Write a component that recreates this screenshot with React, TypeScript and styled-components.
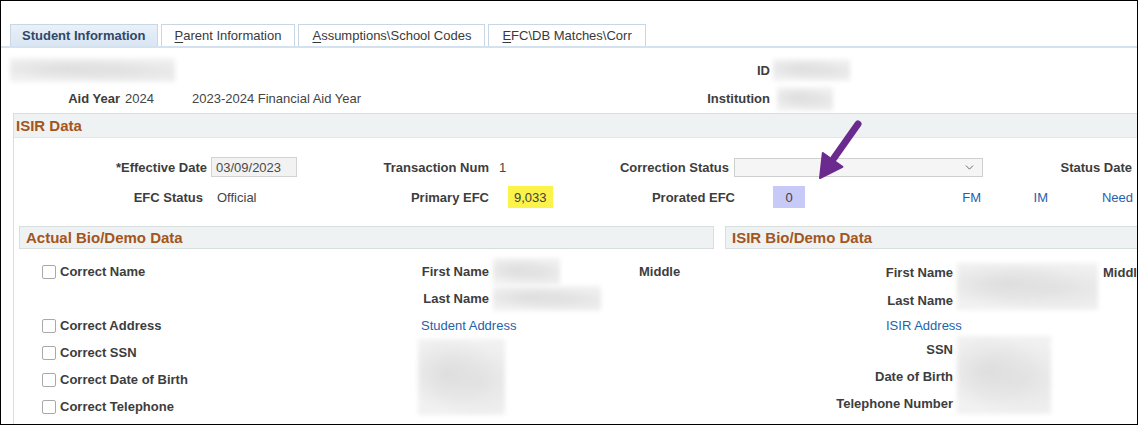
import React from 'react';
import styled, { createGlobalStyle, css } from 'styled-components';
import { ChevronDown } from 'lucide-react';

const GlobalStyle = createGlobalStyle`
	html, body {
		margin: 0;
		padding: 0;
		background: #fff;
	}

	body {
		font-family: "Liberation Sans", Arial, sans-serif;
		font-size: 13px;
		color: #333;
	}
`;

const Frame = styled.div`
	position: relative;
	width: 1138px;
	height: 425px;
	box-sizing: border-box;
	border: 1px solid #000;
	overflow: hidden;
	background: #fff;
`;

const TabBar = styled.div`
	display: flex;
	gap: 3px;
	padding: 23px 0 0 9px;
	border-bottom: 2px solid #d4e2f0;
`;

const Tab = styled.div<{ $active?: boolean }>`
	height: 22px;
	box-sizing: border-box;
	display: flex;
	align-items: center;
	padding: 0 13px;
	border: 1px solid #c9d6e4;
	border-bottom: none;
	background: #fff;
	color: #3a3a3a;
	white-space: nowrap;

	${({ $active }) => $active && css`
		padding: 0 11px;
		background: linear-gradient(#e9f0f8, #d9e6f3);
		color: #2f4868;
		font-weight: bold;
	`}

	& > u {
		text-underline-offset: 2px;
	}
`;

const Row = styled.div<{ $h: number; $mt: number; $pl?: number }>`
	display: flex;
	align-items: center;
	height: ${({ $h }) => $h}px;
	margin-top: ${({ $mt }) => $mt}px;
	padding-left: ${({ $pl }) => $pl || 0}px;
	white-space: nowrap;
`;

const Label = styled.div<{ $w: number }>`
	flex: none;
	width: ${({ $w }) => $w}px;
	text-align: right;
	font-weight: bold;
	color: #3d3d3d;
`;

const Value = styled.div<{ $w?: number; $pl?: number }>`
	flex: none;
	width: ${({ $w }) => ($w ? `${$w}px` : 'auto')};
	padding-left: ${({ $pl }) => $pl || 0}px;
	box-sizing: border-box;
	color: #444;
`;

const Smudge = styled.div<{ $w: number; $h: number; $ml?: number }>`
	flex: none;
	width: ${({ $w }) => $w}px;
	height: ${({ $h }) => $h}px;
	margin-left: ${({ $ml }) => $ml || 0}px;
	background:
		radial-gradient(ellipse at 35% 45%, #dedede 0%, rgba(222, 222, 222, 0) 60%),
		radial-gradient(ellipse at 70% 55%, #e3e3e3 0%, rgba(227, 227, 227, 0) 65%),
		#f1f1f1;
	filter: blur(2px);
`;

const Section = styled.div`
	margin: 3px -10px 0 12px;
	border-left: 1px solid #d9dfe0;
	border-top: 1px solid #d9dfe0;
	height: 320px;
`;

const SectionBar = styled.div`
	height: 23px;
	display: flex;
	align-items: center;
	background: #eff2f2;
	border-bottom: 1px solid #e2e7e7;
`;

const Title = styled.div<{ $pl: number }>`
	padding-left: ${({ $pl }) => $pl}px;
	font-size: 15px;
	font-weight: bold;
	color: #a4551c;
	white-space: nowrap;
`;

const DateInput = styled.div`
	flex: none;
	width: 86px;
	height: 20px;
	margin-left: 4px;
	box-sizing: border-box;
	display: flex;
	align-items: center;
	padding-left: 4px;
	background: #f2f2f2;
	border: 1px solid #d3d3d3;
	color: #4a4a4a;
`;

const Select = styled.div`
	flex: none;
	width: 249px;
	height: 19px;
	margin-left: 5px;
	box-sizing: border-box;
	display: flex;
	align-items: center;
	justify-content: flex-end;
	padding-right: 6px;
	background: #f5f5f5;
	border: 1px solid #cfcfcf;
	color: #555;
`;

const Mark = styled.div<{ $bg: string; $w: number; $ml: number; $center?: boolean }>`
	flex: none;
	width: ${({ $w }) => $w}px;
	height: 22px;
	margin-left: ${({ $ml }) => $ml}px;
	box-sizing: border-box;
	display: flex;
	align-items: center;
	justify-content: ${({ $center }) => ($center ? 'center' : 'flex-start')};
	padding-left: ${({ $center }) => ($center ? 0 : 6)}px;
	background: ${({ $bg }) => $bg};
	color: #3e3e3e;
`;

const Link = styled.div<{ $w?: number; $pl?: number }>`
	flex: none;
	width: ${({ $w }) => ($w ? `${$w}px` : 'auto')};
	padding-left: ${({ $pl }) => $pl || 0}px;
	text-align: ${({ $w }) => ($w ? 'right' : 'left')};
	font-weight: normal;
	color: #1f62ab;
	white-space: nowrap;
`;

const BioArea = styled.div`
	display: flex;
	gap: 11px;
	margin-top: 18px;
	padding-left: 5px;
`;

const Panel = styled.div<{ $w: number }>`
	flex: none;
	width: ${({ $w }) => $w}px;
`;

const PanelBar = styled.div`
	height: 23px;
	box-sizing: border-box;
	display: flex;
	align-items: center;
	background: #eff2f2;
	border: 1px solid #d8dede;
`;

const BioGrid = styled.div<{ $cols: string; $rows: string }>`
	display: grid;
	grid-template-columns: ${({ $cols }) => $cols};
	grid-template-rows: ${({ $rows }) => $rows};
	margin-top: 9px;
	align-items: center;
	white-space: nowrap;
`;

const Cell = styled.div<{ $col?: string; $row?: string; $pl?: number; $right?: boolean; $self?: string }>`
	grid-column: ${({ $col }) => $col || 'auto'};
	grid-row: ${({ $row }) => $row || 'auto'};
	padding-left: ${({ $pl }) => $pl || 0}px;
	text-align: ${({ $right }) => ($right ? 'right' : 'left')};
	align-self: ${({ $self }) => $self || 'center'};
	font-weight: bold;
	color: #3d3d3d;
`;

const CheckItem = styled.label`
	grid-column: 1;
	display: flex;
	align-items: center;
	gap: 4px;
	padding-left: 23px;
	font-weight: bold;
	color: #3d3d3d;
`;

const Box = styled.span`
	width: 14px;
	height: 14px;
	box-sizing: border-box;
	border: 1px solid #a9a9a9;
	border-radius: 2px;
	background: #fff;
`;

const Arrow = styled.svg`
	position: absolute;
	left: 805px;
	top: 112px;
`;

const checks = ['Correct Name', 'Correct Address', 'Correct SSN', 'Correct Date of Birth', 'Correct Telephone', ''];
const checkRows = [1, 3, 4, 5, 6, 7];

const App: React.FC = () => {
	return (
		<>
			<GlobalStyle />
			<Frame>
				<TabBar>
					<Tab $active>Student Information</Tab>
					<Tab><u>P</u>arent Information</Tab>
					<Tab><u>A</u>ssumptions\School Codes</Tab>
					<Tab><u>E</u>FC\DB Matches\Corr</Tab>
				</TabBar>

				<Row $h={24} $mt={10} $pl={9}>
					<Smudge $w={165} $h={24} />
					<Label $w={595}>ID</Label>
					<Smudge $w={77} $h={22} $ml={3} />
				</Row>
				<Row $h={23} $mt={5}>
					<Label $w={119}>Aid Year</Label>
					<Value $w={72} $pl={5}>2024</Value>
					<Value $w={176}>2023-2024 Financial Aid Year</Value>
					<Label $w={402}>Institution</Label>
					<Smudge $w={56} $h={24} $ml={7} />
				</Row>

				<Section>
					<SectionBar>
						<Title $pl={2}>ISIR Data</Title>
					</SectionBar>

					<Row $h={20} $mt={19}>
						<Label $w={193}>*Effective Date</Label>
						<DateInput>03/09/2023</DateInput>
						<Label $w={192}>Transaction Num</Label>
						<Value $w={130} $pl={10}>1</Value>
						<Label $w={110}>Correction Status</Label>
						<Select>
							<ChevronDown size={13} strokeWidth={1.6} />
						</Select>
						<Label $w={149}>Status Date</Label>
					</Row>
					<Row $h={22} $mt={9}>
						<Label $w={189}>EFC Status</Label>
						<Value $w={106} $pl={14}>Official</Value>
						<Label $w={180}>Primary EFC</Label>
						<Mark $bg="#fbf24a" $w={45} $ml={19}>9,033</Mark>
						<Label $w={182}>Prorated EFC</Label>
						<Mark $bg="#c7c9f6" $w={32} $ml={38} $center>0</Mark>
						<Link $w={176}>FM</Link>
						<Link $w={67}>IM</Link>
						<Link $w={85}>Need</Link>
					</Row>

					<BioArea>
						<Panel $w={695}>
							<PanelBar>
								<Title $pl={6}>Actual Bio/Demo Data</Title>
							</PanelBar>
							<BioGrid $cols="399px 71px 150px 75px" $rows="repeat(7, 27px)">
								{checks.map((text, i) => (
									<CheckItem key={i} style={{ gridRow: checkRows[i] }}>
										<Box />
										{text}
									</CheckItem>
								))}
								<Cell $col="2" $row="1" $right>First Name</Cell>
								<Cell $col="3" $row="1" $pl={4}><Smudge $w={67} $h={27} /></Cell>
								<Cell $col="4" $row="1">Middle</Cell>
								<Cell $col="2" $row="2" $right>Last Name</Cell>
								<Cell $col="3" $row="2" $pl={4}><Smudge $w={108} $h={25} /></Cell>
								<Cell $col="2 / span 3" $row="3" $pl={3}><Link>Student Address</Link></Cell>
								<Cell $col="2 / span 2" $row="4 / span 3" $self="start"><Smudge $w={87} $h={76} /></Cell>
							</BioGrid>
						</Panel>

						<Panel $w={430}>
							<PanelBar>
								<Title $pl={6}>ISIR Bio/Demo Data</Title>
							</PanelBar>
							<BioGrid $cols="228px 145px 57px" $rows="29px 27px 22px 27px 27px 27px">
								<Cell $col="1" $row="1" $right>First Name</Cell>
								<Cell $col="2" $row="1 / span 2" $pl={4}><Smudge $w={141} $h={47} /></Cell>
								<Cell $col="3" $row="1" $pl={5}>Middle</Cell>
								<Cell $col="1" $row="2" $right>Last Name</Cell>
								<Cell $col="1 / span 2" $row="3" $pl={161}><Link>ISIR Address</Link></Cell>
								<Cell $col="1" $row="4" $right>SSN</Cell>
								<Cell $col="1" $row="5" $right>Date of Birth</Cell>
								<Cell $col="1" $row="6" $right>Telephone Number</Cell>
								<Cell $col="2" $row="4 / span 3" $pl={4} $self="start"><Smudge $w={94} $h={78} /></Cell>
							</BioGrid>
						</Panel>
					</BioArea>
				</Section>

				<Arrow width="60" height="72" viewBox="0 0 60 72">
					<line x1="52" y1="11" x2="28" y2="45" stroke="#6a2a8e" strokeWidth="7" strokeLinecap="round" />
					<polygon points="14,65 16.8,40.1 36.4,53.9" fill="#6a2a8e" stroke="#6a2a8e" strokeWidth="2" strokeLinejoin="round" />
				</Arrow>
			</Frame>
		</>
	);
};

export default App;
